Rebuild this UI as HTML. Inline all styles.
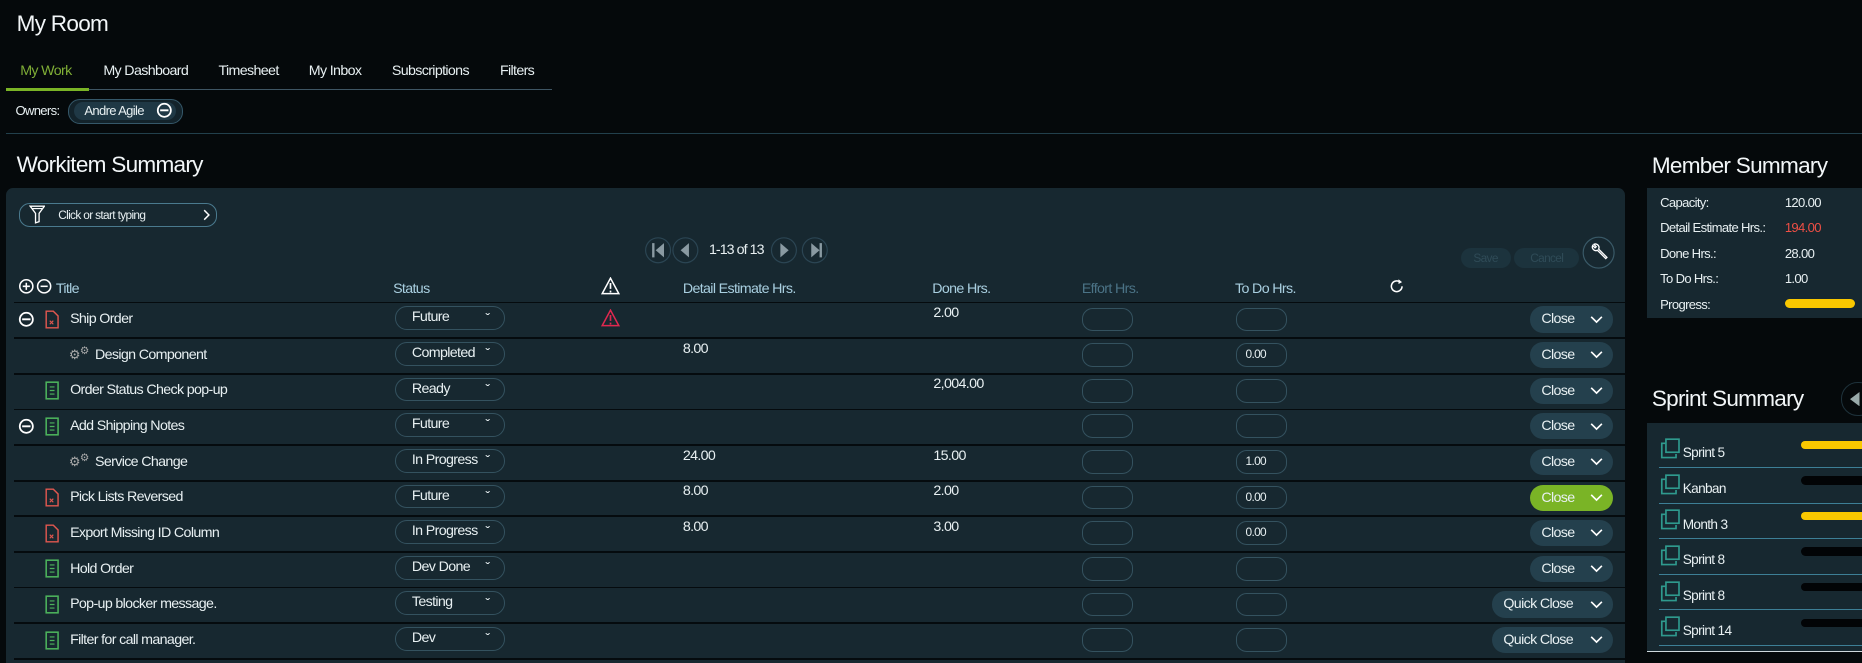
<!DOCTYPE html>
<html><head><meta charset="utf-8"><style>
*{box-sizing:border-box;margin:0;padding:0}
html,body{width:1862px;height:663px;overflow:hidden;background:#05090b}
#w{zoom:1.1875;width:1568px;height:559px;position:relative;font-family:"Liberation Sans",sans-serif;font-size:12px;color:#e8f0f2;letter-spacing:-0.55px}
.a{position:absolute;white-space:nowrap}
.h1{font-size:19px;color:#f2f6f8;letter-spacing:-0.6px}
.tab{top:53px;font-size:12px}
.panel{left:5px;top:158px;width:1363px;height:420px;background:#172830;border-radius:6px}
.hd{color:#a9cfe0;top:237px}
.line{position:absolute;height:1px;background:#0a1419}
.sel{position:absolute;left:333px;width:92px;height:20px;border:1px solid #34525f;border-radius:10px;padding-left:13px;line-height:17px}
.sel:after{content:"ˇ";position:absolute;right:12px;top:1px;font-size:12px}
.inp{position:absolute;width:43px;height:20px;border:1px solid #34525f;border-radius:9px;font-size:10px;padding-left:7px;line-height:18px}
.btn{position:absolute;height:22px;background:#24404d;border-radius:11px;line-height:22px;padding-left:10px;color:#e8f0f2}
.btn svg{position:absolute;right:8px;top:7px}
.g{background:#7ab426}
.mr{position:absolute;left:1398px}
.sp{position:absolute;left:1397px;width:171px;height:30px;border-bottom:1px solid #3d7f96}
.pb{position:absolute;left:1517px;width:60px;height:7px;border-radius:4px;background:#020406}
</style></head><body><div id="w">
<div class="a h1" style="left:14px;top:9px">My Room</div>
<div class="a tab" style="left:17px;color:#7fae36">My Work</div>
<div class="a tab" style="left:87px">My Dashboard</div>
<div class="a tab" style="left:184px">Timesheet</div>
<div class="a tab" style="left:260px">My Inbox</div>
<div class="a tab" style="left:330px">Subscriptions</div>
<div class="a tab" style="left:421px">Filters</div>
<div class="a" style="left:5px;top:75px;width:460px;height:1px;background:#3e5563"></div>
<div class="a" style="left:5px;top:74px;width:70px;height:3px;background:#7ab426"></div>
<div class="a" style="left:13px;top:87px;font-size:11px">Owners:</div>
<div class="a" style="left:57px;top:83px;width:97px;height:21px;border:1px solid #35586a;border-radius:10px;background:#13232b"></div>
<div class="a" style="left:62px;top:86px;width:86px;height:15px;border-radius:8px;background:#1f3845"></div>
<div class="a" style="left:71px;top:87px;font-size:11px">Andre Agile</div>
<svg class="a" style="left:131px;top:86px" width="14" height="14"><circle cx="7" cy="7" r="5.5" fill="none" stroke="#fff" stroke-width="1.5"/><path d="M3.5 7h7" stroke="#fff" stroke-width="1.6"/></svg>
<div class="a" style="left:5px;top:112px;width:1563px;height:1px;background:#22404c"></div>
<div class="a h1" style="left:14px;top:128px">Workitem Summary</div>
<div class="a panel"></div>
<div class="a" style="left:16px;top:171px;width:167px;height:20px;border:1px solid #4a7a8e;border-radius:9px"></div>
<svg class="a" style="left:24px;top:173px" width="14" height="16"><path d="M1 1h12L8.5 7v7l-3 1V7z" fill="none" stroke="#fff" stroke-width="1.1"/><path d="M3 3h8" stroke="#fff"/></svg>
<div class="a" style="left:49px;top:175px;font-size:10px">Click or start typing</div>
<svg class="a" style="left:171px;top:176px" width="7" height="10"><path d="M1 1l4 4-4 4" fill="none" stroke="#fff" stroke-width="1.2"/></svg>
<svg class="a" style="left:543px;top:199px" width="160" height="24">
<g fill="none" stroke="#2b4553"><circle cx="11" cy="12" r="10.5"/><circle cx="34" cy="12" r="10.5"/><circle cx="117" cy="12" r="10.5"/><circle cx="143" cy="12" r="10.5"/></g>
<g fill="#8a9aa2"><rect x="6" y="6" width="2" height="12"/><path d="M16 6v12l-7-6z"/><path d="M37 6v12l-7-6z"/><path d="M114 6v12l7-6z"/><path d="M140 6v12l7-6z"/><rect x="147" y="6" width="2" height="12"/></g>
</svg>
<div class="a" style="left:597px;top:204px;font-size:12px;letter-spacing:-0.8px">1-13 of 13</div>
<div class="a" style="left:1230px;top:209px;width:42px;height:17px;border-radius:9px;background:#1c333d;color:#2f4b57;font-size:10px;text-align:center;line-height:17px">Save</div>
<div class="a" style="left:1275px;top:209px;width:55px;height:17px;border-radius:9px;background:#1c333d;color:#2f4b57;font-size:10px;text-align:center;line-height:17px">Cancel</div>
<svg class="a" style="left:1332px;top:199px" width="28" height="28"><circle cx="14" cy="14" r="13" fill="none" stroke="#3a5a68"/><path d="M9 8a3 3 0 0 0 4 4l7 7 1-1-7-7a3 3 0 0 0-4-4l2 2-1 1z" fill="none" stroke="#fff" stroke-width="1.1"/></svg>
<svg class="a" style="left:15px;top:234px" width="30" height="14"><g fill="none" stroke="#fff" stroke-width="1.3"><circle cx="7" cy="7" r="5.5"/><path d="M4 7h6M7 4v6"/><circle cx="22" cy="7" r="5.5"/><path d="M19 7h6"/></g></svg>
<div class="a hd" style="left:47px">Title</div>
<div class="a hd" style="left:331px">Status</div>
<svg class="a" style="left:506px;top:233px" width="16" height="15"><path d="M8 1L15 14H1z" fill="none" stroke="#fff" stroke-width="1.3"/><path d="M8 5v5M8 11.5v1.5" stroke="#fff" stroke-width="1.4"/></svg>
<div class="a hd" style="left:575px">Detail Estimate Hrs.</div>
<div class="a hd" style="left:785px">Done Hrs.</div>
<div class="a hd" style="left:911px;color:#4b7386">Effort Hrs.</div>
<div class="a hd" style="left:1040px">To Do Hrs.</div>
<svg class="a" style="left:1170px;top:234px" width="14" height="14"><path d="M11 7a4.5 4.5 0 1 1-2-3.8" fill="none" stroke="#fff" stroke-width="1.3"/><path d="M8 1l3 2.5-3 1.5z" fill="#fff"/></svg>
<div class="line" style="left:12px;top:254px;width:1356px;height:1.5px;background:#050b0e"></div>
<div id="rows"></div>

<div class="a h1" style="left:1391px;top:129px">Member Summary</div>
<div class="a" style="left:1387px;top:158px;width:181px;height:110px;background:#172830"></div>
<div class="a mr" style="top:164px;font-size:11px">Capacity:</div><div class="a" style="left:1503px;top:164px;font-size:11px">120.00</div>
<div class="a mr" style="top:185px;font-size:11px">Detail Estimate Hrs.:</div><div class="a" style="left:1503px;top:185px;font-size:11px;color:#ef4f45">194.00</div>
<div class="a mr" style="top:207px;font-size:11px">Done Hrs.:</div><div class="a" style="left:1503px;top:207px;font-size:11px">28.00</div>
<div class="a mr" style="top:228px;font-size:11px">To Do Hrs.:</div><div class="a" style="left:1503px;top:228px;font-size:11px">1.00</div>
<div class="a mr" style="top:250px;font-size:11px">Progress:</div><div class="a" style="left:1503px;top:252px;width:59px;height:7px;border-radius:4px;background:#fac800"></div>
<div class="a h1" style="left:1391px;top:325px">Sprint Summary</div>
<div class="a" style="left:1550px;top:322px;width:30px;height:28px;border-radius:14px;border:1px solid #1e323b"></div>
<svg class="a" style="left:1558px;top:330px" width="10" height="12"><path d="M8 0v12L0 6z" fill="#9aa"/></svg>
<div class="a" style="left:1387px;top:356px;width:181px;height:193px;background:#172830;border-bottom:1px solid #cfd8dc"></div>
<div id="sp"></div>
</div>
<script>
var R=[["Ship Order",1,"r","Future",1,"","2.00","",0],["Design Component",0,"c","Completed",0,"8.00","","0.00",0],["Order Status Check pop-up",0,"n","Ready",0,"","2,004.00","",0],["Add Shipping Notes",1,"n","Future",0,"","","",0],["Service Change",0,"c","In Progress",0,"24.00","15.00","1.00",0],["Pick Lists Reversed",0,"r","Future",0,"8.00","2.00","0.00",2],["Export Missing ID Column",0,"r","In Progress",0,"8.00","3.00","0.00",0],["Hold Order",0,"n","Dev Done",0,"","","",0],["Pop-up blocker message.",0,"n","Testing",0,"","","",1],["Filter for call manager.",0,"n","Dev",0,"","","",1],["",0,"","",0,"","","",0]];
var h="",chev='<svg width="11" height="8"><path d="M1 1.5l4.5 4.5 4.5-4.5" fill="none" stroke="#fff" stroke-width="1.4"/></svg>';
R.forEach(function(r,i){var t=254+30*i,c=t+15;
if(i<10)h+='<div class="line" style="left:12px;top:'+(t+30)+'px;width:1356px;height:1.5px;background:#050b0e"></div>';
if(r[1])h+='<svg class="a" style="left:15px;top:'+(c-7)+'px" width="14" height="14"><circle cx="7" cy="7" r="5.5" fill="none" stroke="#fff" stroke-width="1.5"/><path d="M3.5 7h7" stroke="#fff" stroke-width="1.6"/></svg>';
if(r[2]=="r")h+='<svg class="a" style="left:38px;top:'+(c-8)+'px" width="12" height="16"><path d="M1 1h6l4 4v10H1z" fill="none" stroke="#e0574f" stroke-width="1.2"/><path d="M4 9l3 3M7 9l-3 3" stroke="#e0574f"/></svg>';
if(r[2]=="n")h+='<svg class="a" style="left:38px;top:'+(c-8)+'px" width="12" height="16"><rect x="1" y="1" width="10" height="14" fill="none" stroke="#4cb35c" stroke-width="1.3"/><path d="M4 5h4M4 8h4M4 11h4" stroke="#4cb35c"/></svg>';
if(r[2]=="c")h+='<div class="a" style="left:58px;top:'+(c-9)+'px;font-size:11px;color:#aaa">⚙<span style="font-size:9px;vertical-align:4px">⚙</span></div>';
var tx=r[2]=="c"?80:59;
if(r[0])h+='<div class="a" style="left:'+tx+'px;top:'+(c-7)+'px">'+r[0]+'</div>';
if(r[3])h+='<div class="sel" style="top:'+(c-11)+'px">'+r[3]+'</div>';
if(r[4])h+='<svg class="a" style="left:506px;top:'+(c-9)+'px" width="16" height="15"><path d="M8 1L15 14H1z" fill="none" stroke="#e0284f" stroke-width="1.3"/><path d="M8 5v5M8 11.5v1.5" stroke="#e0284f" stroke-width="1.4"/></svg>';
if(r[5])h+='<div class="a" style="left:575px;top:'+(t+3)+'px">'+r[5]+'</div>';
if(r[6])h+='<div class="a" style="left:786px;top:'+(t+3)+'px">'+r[6]+'</div>';
if(i<10){h+='<div class="inp" style="left:911px;top:'+(c-10)+'px"></div><div class="inp" style="left:1041px;top:'+(c-10)+'px">'+r[7]+'</div>';
var q=r[8]==1;h+='<div class="btn'+(r[8]==2?' g':'')+'" style="left:'+(q?1256:1288)+'px;width:'+(q?102:70)+'px;top:'+(c-11)+'px">'+(q?'Quick Close':'Close')+chev+'</div>';}
else{h+='<div class="inp" style="left:911px;top:'+(c-10)+'px"></div><div class="inp" style="left:1041px;top:'+(c-10)+'px"></div><div class="sel" style="top:'+(c-11)+'px"></div><div class="btn" style="left:1256px;width:102px;top:'+(c-11)+'px"></div>';}
});
document.getElementById("rows").innerHTML=h;
var S=[["Sprint 5",1],["Kanban",0],["Month 3",1],["Sprint 8",0],["Sprint 8",0],["Sprint 14",0]],s="";
S.forEach(function(x,i){var t=364+30*i;
s+='<div class="sp" style="top:'+t+'px"></div>';
s+='<svg class="a" style="left:1398px;top:'+(t+5)+'px" width="18" height="18"><path d="M4.5 4.5H1.5V16.5H13.5V13.5" fill="none" stroke="#2f9a8e" stroke-width="1.4"/><rect x="5" y="1" width="11" height="11" fill="none" stroke="#2f9a8e" stroke-width="1.4"/></svg>';
s+='<div class="a" style="left:1417px;top:'+(t+11)+'px;font-size:11.5px">'+x[0]+'</div>';
s+='<div class="pb" style="top:'+(t+7)+'px;'+(x[1]?'background:#fac800':'')+'"></div>';});
document.getElementById("sp").innerHTML=s;
</script>
</body></html>
